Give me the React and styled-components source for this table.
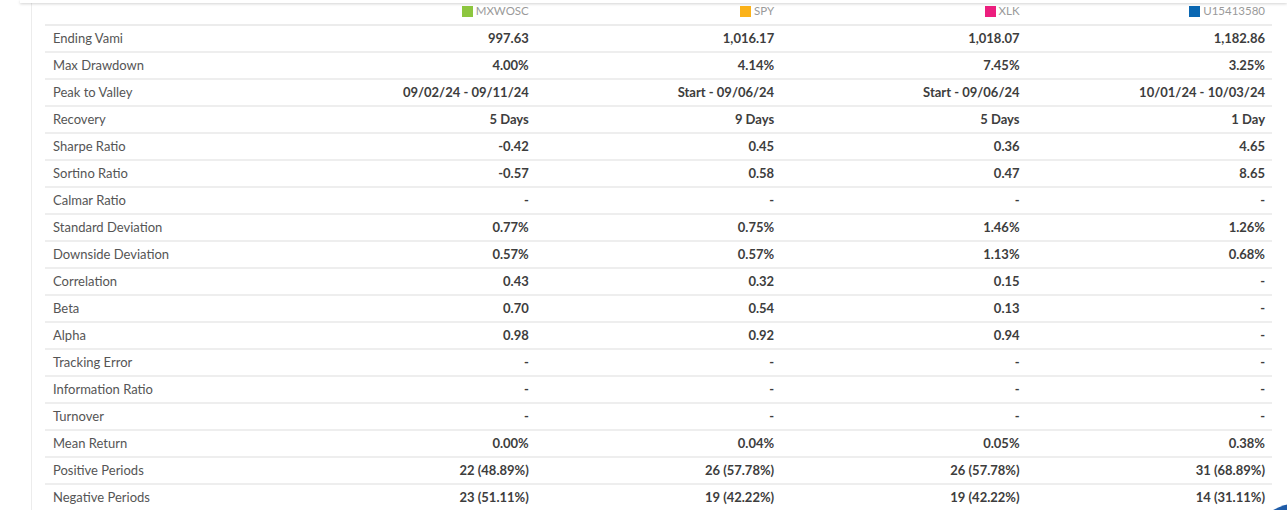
import React from 'react';
import styled, {createGlobalStyle} from 'styled-components';

const GlobalStyle = createGlobalStyle`
body {
  margin: 0;
  background: #fff;
  font-family: Lato, "Open Sans", Arial, sans-serif;
  overflow: hidden;
}
`

const series = [
    {name: 'MXWOSC', color: '#8dc63f'},
    {name: 'SPY', color: '#fbb21a'},
    {name: 'XLK', color: '#ec1e7e'},
    {name: 'U15413580', color: '#0a67b2'},
];

// one row per statistic, values in the same order as series
const rows = [
    ['Ending Vami', '997.63', '1,016.17', '1,018.07', '1,182.86'],
    ['Max Drawdown', '4.00%', '4.14%', '7.45%', '3.25%'],
    ['Peak to Valley', '09/02/24 - 09/11/24', 'Start - 09/06/24', 'Start - 09/06/24', '10/01/24 - 10/03/24'],
    ['Recovery', '5 Days', '9 Days', '5 Days', '1 Day'],
    ['Sharpe Ratio', '-0.42', '0.45', '0.36', '4.65'],
    ['Sortino Ratio', '-0.57', '0.58', '0.47', '8.65'],
    ['Calmar Ratio', '-', '-', '-', '-'],
    ['Standard Deviation', '0.77%', '0.75%', '1.46%', '1.26%'],
    ['Downside Deviation', '0.57%', '0.57%', '1.13%', '0.68%'],
    ['Correlation', '0.43', '0.32', '0.15', '-'],
    ['Beta', '0.70', '0.54', '0.13', '-'],
    ['Alpha', '0.98', '0.92', '0.94', '-'],
    ['Tracking Error', '-', '-', '-', '-'],
    ['Information Ratio', '-', '-', '-', '-'],
    ['Turnover', '-', '-', '-', '-'],
    ['Mean Return', '0.00%', '0.04%', '0.05%', '0.38%'],
    ['Positive Periods', '22 (48.89%)', '26 (57.78%)', '26 (57.78%)', '31 (68.89%)'],
    ['Negative Periods', '23 (51.11%)', '19 (42.22%)', '19 (42.22%)', '14 (31.11%)'],
];

function App() {
    return (
        <Page>
            <GlobalStyle />
            <TopShade />
            <Card>
                <StatsTable>
                    <thead>
                        <tr>
                            <HeadCell />
                            {series.map(s => (
                                <HeadCell key={s.name}>
                                    <Legend>
                                        <Swatch $color={s.color} />
                                        {s.name}
                                    </Legend>
                                </HeadCell>
                            ))}
                        </tr>
                    </thead>
                    <tbody>
                        {rows.map(([label, ...values]) => (
                            <tr key={label}>
                                <Label>{label}</Label>
                                {values.map((v, i) => (
                                    <Value key={i}>{v}</Value>
                                ))}
                            </tr>
                        ))}
                    </tbody>
                </StatsTable>
            </Card>
            <ChatBubble />
        </Page>
    )
}

const Page = styled.div`
width: 1287px;
height: 510px;
overflow: hidden;
`

const TopShade = styled.div`
height: 3px;
margin-left: 20px;
background: #fff;
box-shadow: 0 1px 3px rgba(0, 0, 0, 0.18);
position: relative;
z-index: 1;
`

const Card = styled.div`
margin-left: 31px;
border-left: 1px solid #ececec;
padding: 0 15px 0 13px;
`

const StatsTable = styled.table`
width: 100%;
table-layout: fixed;
border-collapse: collapse;
font-size: 13px;

tbody tr td {
  box-sizing: border-box;
  height: 27px;
  padding-bottom: 2px;
  line-height: 16px;
  border-bottom: 2px solid #eeeeee;
}
`

const HeadCell = styled.th`
height: 21px;
padding: 0 7px 0 8px;
border-bottom: 2px solid #ececec;
text-align: right;
font-weight: 400;
vertical-align: top;
`

const Legend = styled.span`
display: inline-flex;
align-items: center;
gap: 3px;
font-size: 11.5px;
line-height: 14px;
color: #9a9a9a;
padding-top: 1px;
`

const Swatch = styled.span`
width: 11px;
height: 11px;
background: ${p => p.$color};
`

const Label = styled.td`
padding-left: 8px;
padding-right: 8px;
color: #555;
font-weight: 400;
`

const Value = styled.td`
padding-left: 8px;
padding-right: 7px;
text-align: right;
color: #3d3d3d;
font-weight: 700;
`

const ChatBubble = styled.div`
position: fixed;
right: -68px;
bottom: -103px;
width: 110px;
height: 110px;
border-radius: 50%;
background: #1f5ca8;
`

export default App
